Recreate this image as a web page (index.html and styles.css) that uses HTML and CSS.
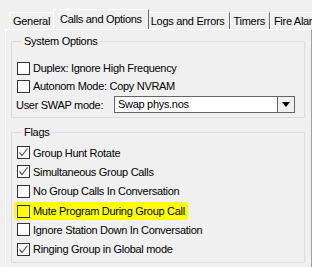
FILE: index.html
```html
<!DOCTYPE html>
<html lang="en">
<head>
  <meta charset="UTF-8">
  <title>Calls and Options</title>
  <link rel="stylesheet" href="styles.css">
</head>
<body>

  <!-- Tab strip -->
  <div class="tabs">
    <div class="tab">General</div>
    <div class="tab active">Calls and Options</div>
    <div class="tab">Logs and Errors</div>
    <div class="tab">Timers</div>
    <div class="tab">Fire Alarm</div>
  </div>

  <div class="panel">
    <!-- System Options -->
    <fieldset class="group system">
      <legend>System Options</legend>
      <label class="check"><span class="box"></span>Duplex: Ignore High Frequency</label>
      <label class="check"><span class="box"></span>Autonom Mode: Copy NVRAM</label>
      <div class="swap">
        <span class="swap-label">User SWAP mode:</span>
        <div class="select">
          <span class="value">Swap phys.nos</span>
          <span class="arrow"><i></i></span>
        </div>
      </div>
    </fieldset>

    <!-- Flags -->
    <fieldset class="group flags">
      <legend>Flags</legend>
      <label class="check"><span class="box checked"></span>Group Hunt Rotate</label>
      <label class="check"><span class="box checked"></span>Simultaneous Group Calls</label>
      <label class="check"><span class="box"></span>No Group Calls In Conversation</label>
      <label class="check"><span class="mark"><span class="box"></span>Mute Program During Group Call</span></label>
      <label class="check"><span class="box"></span>Ignore Station Down In Conversation</label>
      <label class="check"><span class="box checked"></span>Ringing Group in Global mode</label>
    </fieldset>
  </div>

</body>
</html>
```

FILE: styles.css
```css
body {
  margin: 0;
  background-color: #f0f0f0;
  font-family: "Liberation Sans", Arial, sans-serif;
  font-size: 11px;
  letter-spacing: -0.3px;
  color: #000;
  overflow: hidden;
}

/* Tab strip */
.tabs {
  display: flex;
  align-items: flex-end;
  height: 29px;
  padding-left: 9px;
  box-sizing: border-box;
  white-space: nowrap;
  overflow: hidden;
}

.tab {
  height: 17px;
  line-height: 17px;
  padding: 0 4px 0 3px;
  border-top: 1px solid #fff;
  border-left: 1px solid #fff;
  border-right: 1px solid #696969;
  box-sizing: border-box;
  flex-shrink: 0;
}

.tab.active {
  position: relative;
  height: 21px;
  line-height: 18px;
  margin: 0 -2px -1px -2px;
  padding: 0 6px;
  background-color: #f0f0f0;
  z-index: 1;
}

/* Page panel */
.panel {
  margin-left: 5px;
  height: 240px;
  border-top: 1px solid #fff;
  border-left: 1px solid #fff;
  border-right: 1px solid #a0a0a0;
  padding: 5px 6px 0 5px;
  box-sizing: border-box;
}

.group {
  margin: 0;
  border: 1px solid #dcdcdc;
  padding: 0 0 0 5px;
}

.group legend {
  margin-left: 5px;
  padding: 0 2px;
  line-height: 13px;
}

.system {
  height: 83px;
  box-sizing: border-box;
  padding-top: 11px;
}

.flags {
  margin-top: 8px;
  height: 137px;
  box-sizing: border-box;
  padding-top: 4px;
}

.check {
  display: flex;
  align-items: center;
  height: 18px;
  white-space: nowrap;
}

.flags .check {
  height: 19.3px;
}

.box {
  width: 13px;
  height: 13px;
  border: 1px solid #333;
  background-color: #fff;
  box-sizing: border-box;
  margin-right: 3px;
  flex-shrink: 0;
}

.box.checked {
  background: #fff url("data:image/svg+xml,%3Csvg xmlns='http://www.w3.org/2000/svg' width='11' height='11'%3E%3Cpolyline points='1.5,5.5 4,8.5 9.5,1.5' fill='none' stroke='%23555' stroke-width='1.2'/%3E%3C/svg%3E") no-repeat center;
}

.mark {
  display: flex;
  align-items: center;
  background-color: #ffff00;
  margin-left: -3px;
  padding: 3px 3px 2px 3px;
  border-radius: 3px;
}

.mark .box {
  background-color: transparent;
}

.swap {
  display: flex;
  align-items: center;
  margin-top: 1px;
  margin-left: -1px;
  white-space: nowrap;
}

.swap-label {
  width: 98px;
  flex-shrink: 0;
}

.select {
  display: flex;
  width: 181px;
  height: 17px;
  border: 1px solid #646464;
  background-color: #fff;
  box-sizing: border-box;
}

.select .value {
  flex: 1;
  padding-left: 3px;
  line-height: 15px;
}

.select .arrow {
  width: 16px;
  border-left: 1px solid #646464;
  background-color: #f0f0f0;
  display: flex;
  align-items: center;
  justify-content: center;
}

.select .arrow i {
  width: 0;
  height: 0;
  border-left: 4px solid transparent;
  border-right: 4px solid transparent;
  border-top: 5px solid #000;
}
```
